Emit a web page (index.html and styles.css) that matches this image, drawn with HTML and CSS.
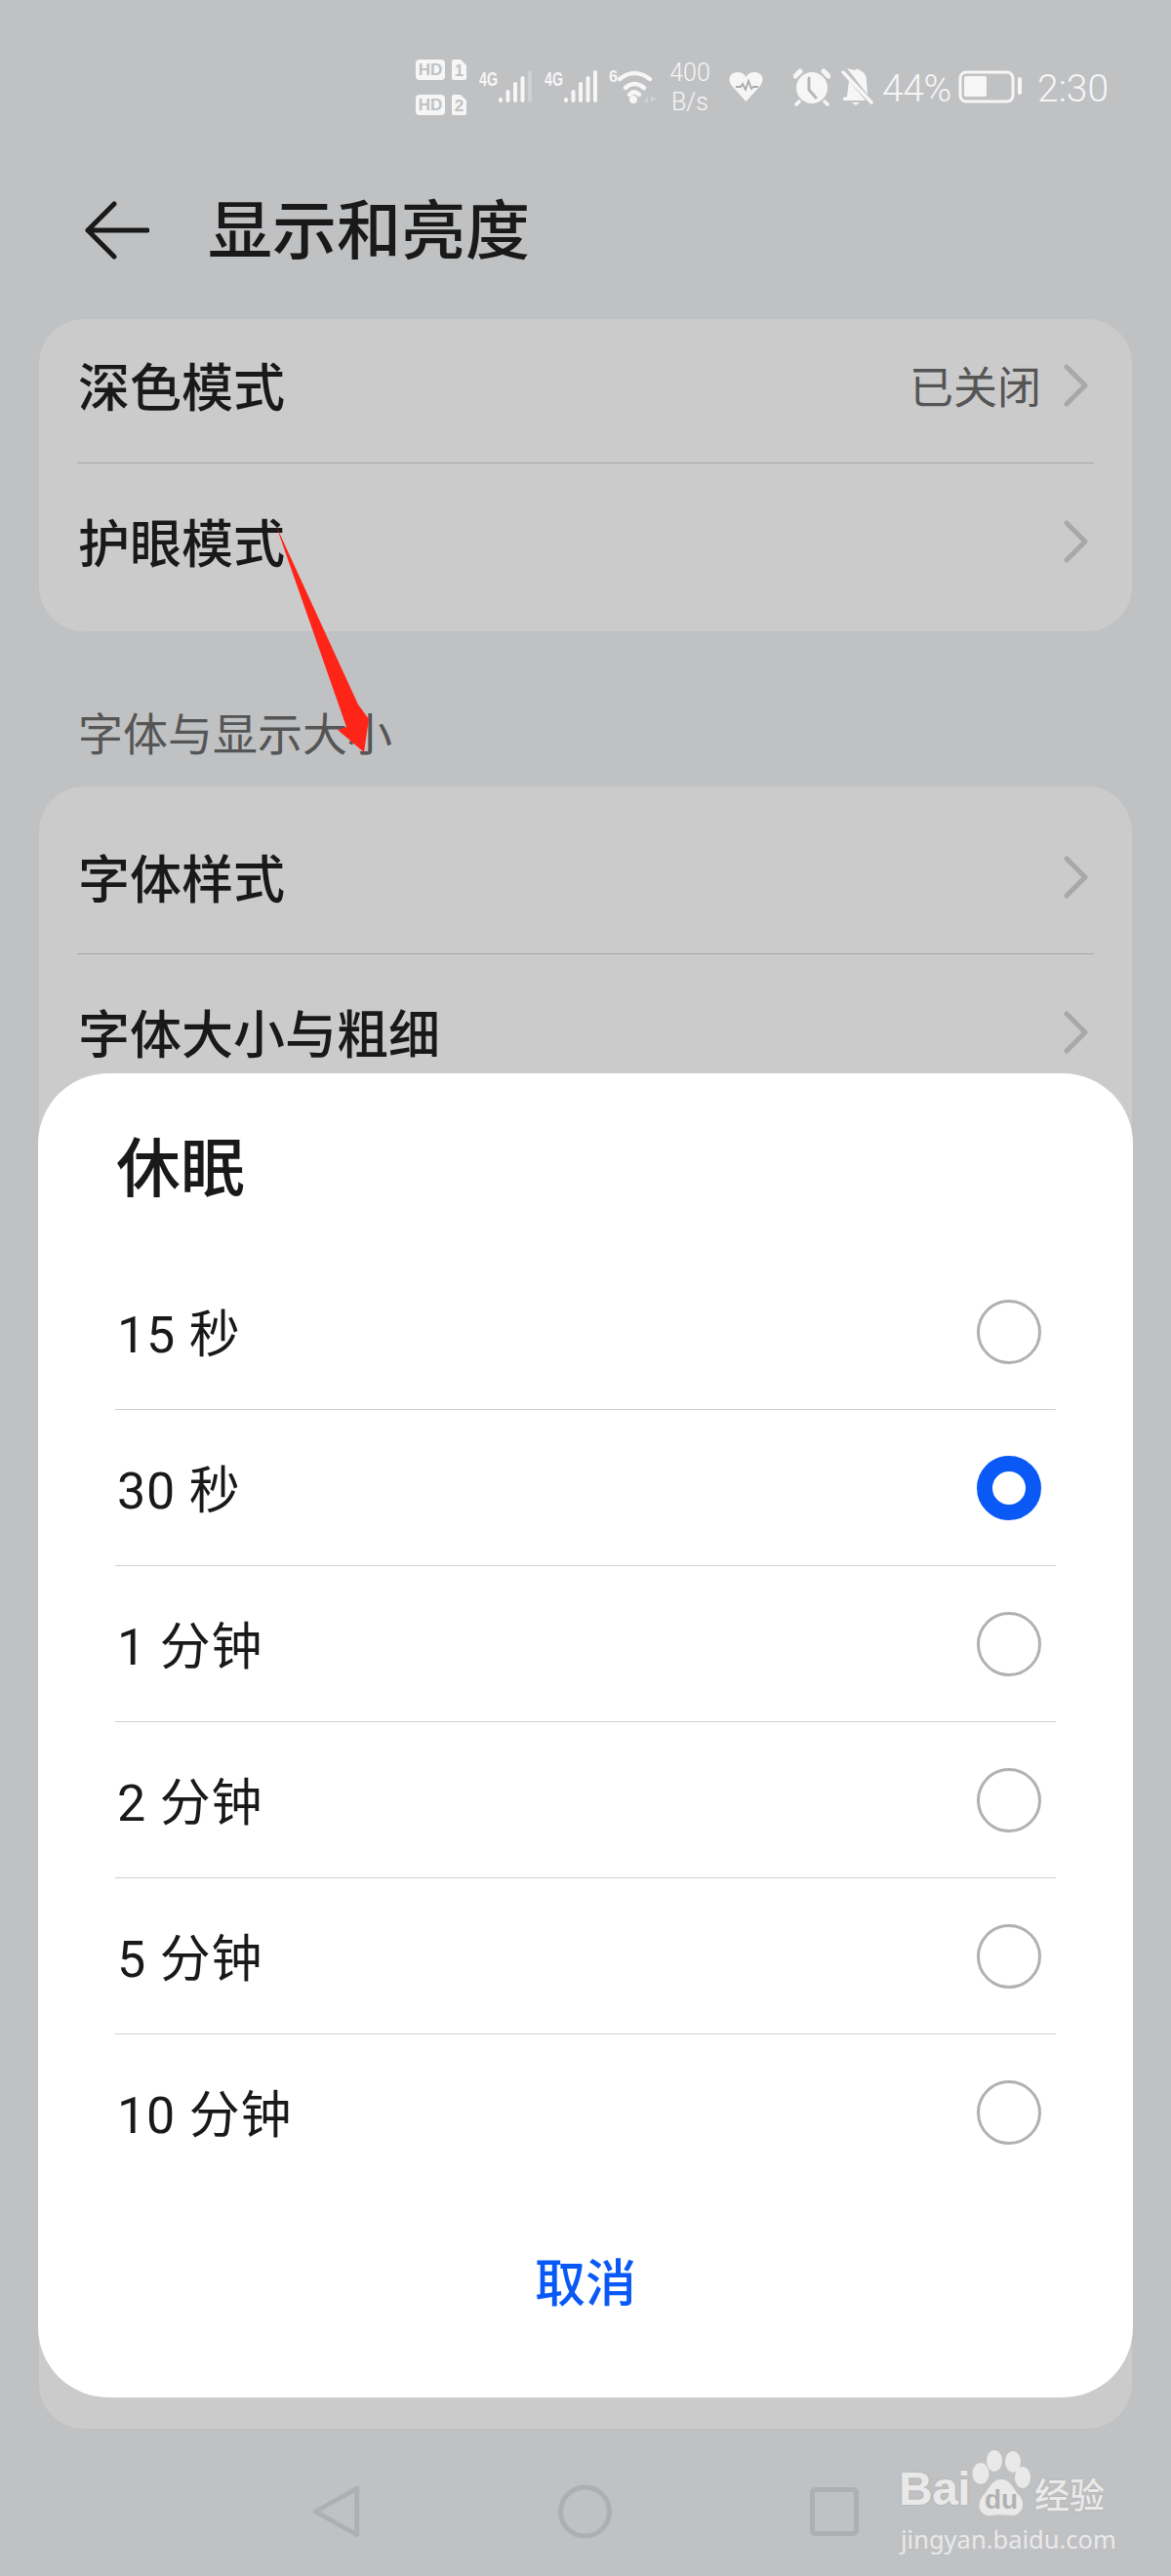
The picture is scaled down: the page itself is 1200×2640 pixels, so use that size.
FILE: index.html
```html
<!DOCTYPE html>
<html lang="zh-CN">
<head>
<meta charset="utf-8">
<title>显示和亮度</title>
<link rel="stylesheet" href="styles.css">
</head>
<body>
<div class="screen">
  <div class="status">
    <svg class="ic sim" viewBox="426 60 52 60">
      <rect x="426" y="61" width="30" height="21" rx="4" class="fill"/><text x="441" y="77" class="hd">HD</text>
      <path d="M465 61h7l6 6v13a2 2 0 0 1-2 2h-11a2 2 0 0 1-2-2v-17a2 2 0 0 1 2-2z" class="fill"/><text x="470.500" y="78" class="hd">1</text>
      <rect x="426" y="97" width="30" height="21" rx="4" class="fill"/><text x="441" y="113" class="hd">HD</text>
      <path d="M465 97h7l6 6v13a2 2 0 0 1-2 2h-11a2 2 0 0 1-2-2v-17a2 2 0 0 1 2-2z" class="fill"/><text x="470.500" y="114" class="hd">2</text>
    </svg>
    <svg class="ic signal" viewBox="491 60 54 60">
      <text x="491" y="87.500" class="lte" textLength="19" lengthAdjust="spacingAndGlyphs">4G</text>
      <rect x="511" y="100" width="4" height="5" rx="2" class="fill"/>
      <rect x="518.500" y="92" width="4" height="13" rx="2" class="fill"/>
      <rect x="526" y="84" width="4" height="21" rx="2" class="fill"/>
      <rect x="533.500" y="78" width="4" height="27" rx="2" class="fill"/>
      <rect x="541" y="72" width="4" height="33" rx="2" class="dim"/>
    </svg>
    <svg class="ic signal" viewBox="558 60 54 60">
      <text x="558" y="87.500" class="lte" textLength="19" lengthAdjust="spacingAndGlyphs">4G</text>
      <rect x="578" y="100" width="4" height="5" rx="2" class="fill"/>
      <rect x="585.500" y="92" width="4" height="13" rx="2" class="fill"/>
      <rect x="593" y="84" width="4" height="21" rx="2" class="fill"/>
      <rect x="600.500" y="78" width="4" height="27" rx="2" class="fill"/>
      <rect x="608" y="72" width="4" height="33" rx="2" class="fill"/>
    </svg>
    <svg class="ic wifi" viewBox="624 60 48 60">
      <text x="624" y="84" class="six" textLength="9" lengthAdjust="spacingAndGlyphs">6</text>
      <path d="M635 81Q650 69 666 81M641 90Q650 82 660 90M645 97Q650 92 655 97" class="wave"/>
      <circle cx="649" cy="102" r="4" class="fill"/>
      <path d="M660 105l4-7v7zM667 98l5 3.500-5 3.500z" class="dim"/>
    </svg>
    <div class="speed"><span>400</span><span>B/s</span></div>
    <svg class="ic heart" viewBox="747 60 35 60">
      <path d="M764.500 104L750 88C744 79 750 74 756 74C760 74 763 76 764.500 79C766 76 769 74 773 74C779 74 785 79 779 88Z" class="fill"/>
      <path d="M754 89h5l2-3 3 6 3-9 3 8 2-2h5" class="pulse"/>
    </svg>
    <svg class="ic alarm" viewBox="813 60 38 60">
      <circle cx="832" cy="90" r="16" class="fill"/>
      <path d="M815 78l5-5 M849 78l-5-5" class="ear"/>
      <path d="M819 104l-3 3M845 104l3 3" class="foot"/>
      <path d="M829 80v12l7 8" class="hands"/>
    </svg>
    <svg class="ic bell" viewBox="862 60 33 60">
      <path d="M876 72a3 3 0 0 1 5 0c5 2 7 6 7 11l1 14-21-27zM870 83l17 20h-23v-3l4-1z" class="fill"/>
      <path d="M873 105h8l-4 3z" class="fill"/>
      <path d="M864 74l29 31" class="slash"/>
    </svg>
    <span class="pct">44%</span>
    <svg class="ic battery" viewBox="982 60 65 60">
      <rect x="984" y="74" width="54" height="30" rx="6" class="batbox"/>
      <rect x="988" y="78" width="23" height="21" rx="2" class="fill"/>
      <rect x="1043" y="79" width="4" height="18" rx="2" class="fill"/>
    </svg>
    <span class="time">2:30</span>
  </div>

  <header class="head">
    <svg class="back" viewBox="0 0 66 60"><path d="M64 30H3M30 3L3 30l27 27"/></svg>
    <h1 class="title">显示和亮度</h1>
  </header>

  <section class="card">
    <div class="row row-a line"><span class="name">深色模式</span><span class="value">已关闭</span><svg class="chev" viewBox="0 0 25 44"><path d="M3 3l19 19L3 41"/></svg></div>
    <div class="row row-b"><span class="name">护眼模式</span><svg class="chev" viewBox="0 0 25 44"><path d="M3 3l19 19L3 41"/></svg></div>
  </section>

  <div class="section">字体与显示大小</div>

  <section class="card card-long">
    <div class="row row-c line"><span class="name">字体样式</span><svg class="chev" viewBox="0 0 25 44"><path d="M3 3l19 19L3 41"/></svg></div>
    <div class="row row-b"><span class="name">字体大小与粗细</span><svg class="chev" viewBox="0 0 25 44"><path d="M3 3l19 19L3 41"/></svg></div>
  </section>

  <nav class="nav">
    <svg class="navic tri" viewBox="316 2544 56 62"><path d="M366.500 2550.500V2599.500L322.500 2575Z"/></svg>
    <svg class="navic cir" viewBox="570 2546 60 58"><circle cx="599.500" cy="2575" r="25"/></svg>
    <svg class="navic squ" viewBox="828 2546 54 58"><rect x="832.500" y="2552.500" width="45" height="45" rx="3"/></svg>
  </nav>

  <svg class="arrow" viewBox="0 0 110 240"><path d="M3 3L87 186L98 201L93 235L66 212L75 209Z"/></svg>

  <div class="dialog">
    <h2 class="dtitle">休眠</h2>
    <ul class="opts">
      <li class="opt"><span>15 秒</span><i class="radio"></i></li>
      <li class="opt"><span>30 秒</span><i class="radio on"></i></li>
      <li class="opt"><span>1 分钟</span><i class="radio"></i></li>
      <li class="opt"><span>2 分钟</span><i class="radio"></i></li>
      <li class="opt"><span>5 分钟</span><i class="radio"></i></li>
      <li class="opt"><span>10 分钟</span><i class="radio"></i></li>
    </ul>
    <div class="cancel">取消</div>
  </div>

  <div class="mark">
    <div class="mark-top">
      <span class="bai">Bai</span>
      <svg class="paw" viewBox="0 0 64 70">
        <ellipse cx="11" cy="24" rx="8.500" ry="11" class="wm"/>
        <ellipse cx="25" cy="11" rx="8" ry="11" class="wm"/>
        <ellipse cx="44" cy="12" rx="8" ry="11" class="wm"/>
        <ellipse cx="54" cy="28" rx="8" ry="11" class="wm"/>
        <path d="M32 30C42 30 44 40 51 47C58 56 52 68 42 67C36 66 28 66 22 67C10 68 6 56 13 47C20 40 22 30 32 30Z" class="wm"/>
        <text x="32" y="60" class="du">du</text>
      </svg>
      <span class="jy">经验</span>
    </div>
    <div class="mark-url">jingyan.baidu.com</div>
  </div>
</div>
</body>
</html>
```

FILE: styles.css
```css
* { box-sizing: border-box; margin: 0; padding: 0; }
html, body { width: 1200px; height: 2640px; overflow: hidden; }
body { background: #c0c1c3; font-family: Roboto, "Noto Sans CJK SC", sans-serif; color: #191919; }
.screen { position: relative; width: 1200px; height: 2640px; display: flex; flex-direction: column; }

.status { height: 130px; padding: 60px 0 0 426px; display: flex; align-items: flex-start; color: #f6f6f6; }
.ic { height: 60px; flex: none; display: block; }
.sim { width: 52px; }
.signal { width: 54px; margin-left: 13px; }
.wifi { width: 48px; margin-left: 12px; }
.heart { width: 35px; margin-left: 20px; }
.alarm { width: 38px; margin-left: 31px; }
.bell { width: 33px; margin-left: 11px; }
.battery { width: 65px; margin-left: 9px; }
.fill { fill: #f6f6f6; }
.dim { fill: #d0d1d2; }
.hd { font: 700 17px "Liberation Sans", sans-serif; fill: #c0c1c3; text-anchor: middle; }
.lte { font: 700 20px "Liberation Sans", sans-serif; fill: #f6f6f6; }
.six { font: 700 16px "Liberation Sans", sans-serif; fill: #f6f6f6; }
.wave { fill: none; stroke: #f6f6f6; stroke-width: 4.5; stroke-linecap: round; }
.pulse { fill: none; stroke: #a9aaac; stroke-width: 1.8; }
.ear { fill: none; stroke: #f6f6f6; stroke-width: 5; stroke-linecap: round; }
.foot { fill: none; stroke: #f6f6f6; stroke-width: 3.5; stroke-linecap: round; }
.hands { fill: none; stroke: #b4b5b7; stroke-width: 3; stroke-linecap: round; stroke-linejoin: round; }
.slash { fill: none; stroke: #f6f6f6; stroke-width: 3.500; stroke-linecap: round; }
.batbox { fill: none; stroke: #f6f6f6; stroke-width: 3; }
.speed { width: 40px; margin-left: 15px; display: flex; flex-direction: column; align-items: center; gap: 6px; padding-top: 3px; font-size: 25px; line-height: 24px; font-weight: 300; flex: none; white-space: nowrap; }
.pct, .time { font-size: 39px; line-height: 38px; font-weight: 300; padding-top: 12px; flex: none; white-space: nowrap; }
.pct { margin-left: 9px; width: 69px; letter-spacing: -.4px; }
.time { margin-left: 16px; letter-spacing: 0; }

.head { height: 197px; padding: 15px 0 0 87px; display: flex; align-items: center; }
.back { width: 66px; height: 60px; flex: none; }
.back path { fill: none; stroke: #191919; stroke-width: 5; stroke-linecap: round; stroke-linejoin: round; }
.title { margin: 4px 0 0 60px; font-size: 66px; line-height: 80px; font-weight: 500; }

.card { margin: 0 40px; height: 320px; background: #cbcbcb; border-radius: 46px; padding: 0 39px; flex: none; }
.card-long { height: 1683px; }
.row { display: flex; align-items: center; padding: 0 6px 0 1px; }
.row-a { height: 148px; padding-bottom: 3px; }
.row-b { height: 172px; padding-bottom: 4px; }
.row-c { height: 172px; padding-top: 23px; }
.line { border-bottom: 1px solid #a7a7a7; }
.name { font-size: 53px; line-height: 70px; font-weight: 500; flex: 1; white-space: nowrap; }
.value { font-size: 45px; line-height: 60px; color: #555; margin-right: 23px; }
.chev { width: 25px; height: 44px; flex: none; margin-bottom: 9px; }
.chev path { fill: none; stroke: #a8a8a8; stroke-width: 5; stroke-linecap: round; stroke-linejoin: round; }
.section { height: 159px; padding: 51px 0 0 80px; font-size: 46px; line-height: 110px; color: #555; flex: none; }

.nav { height: 151px; flex: none; position: relative; padding-top: 55px; display: flex; }
.navic { height: 60px; flex: none; }
.navic path, .navic circle, .navic rect { fill: none; stroke: #aeafb0; stroke-width: 5; stroke-linejoin: round; }
.tri { width: 56px; margin-left: 316px; }
.cir { width: 60px; margin-left: 198px; }
.squ { width: 54px; margin-left: 198px; }

.arrow { position: absolute; left: 280px; top: 536px; width: 110px; height: 240px; }
.arrow path { fill: #ff2418; }

.dialog { position: absolute; left: 39px; top: 1100px; width: 1122px; height: 1357px; background: #fff; border-radius: 72px; display: flex; flex-direction: column; }
.dtitle { height: 185px; padding: 59px 0 0 80px; font-size: 66px; line-height: 80px; font-weight: 500; }
.opts { list-style: none; margin: 0 79px; }
.opt { height: 160px; display: flex; align-items: center; justify-content: space-between; border-bottom: 1px solid #cfcfcf; padding-right: 15px; font-size: 52px; line-height: 70px; padding-left: 2px; letter-spacing: .8px; }
.opt span { padding-top: 8px; }
.opt:last-child { border-bottom: 0; }
.radio { width: 66px; height: 66px; border-radius: 50%; border: 3.5px solid #b1b1b1; display: block; flex: none; }
.radio.on { border: 16.5px solid #0a59f7; }
.cancel { text-align: center; font-size: 52px; line-height: 70px; font-weight: 500; color: #0a59f7; margin-top: 62px; }

.mark { position: absolute; left: 921px; top: 2511px; width: 220px; color: #e9e9e9; }
.mark-top { display: flex; align-items: flex-end; height: 70px; }
.bai { font: 700 48px/48px "Liberation Sans", sans-serif; width: 73px; flex: none; padding-bottom: 6px; letter-spacing: -.5px; text-shadow: 0 0 2px #a5a6a8; }
.paw { width: 64px; height: 70px; flex: none; }
.wm { fill: #e9e9e9; }
.du { font: 700 28px "Liberation Sans", sans-serif; fill: #b0b1b3; text-anchor: middle; }
.jy { font-size: 36px; line-height: 44px; font-weight: 500; flex: none; margin-left: 2px; text-shadow: 0 0 2px #a5a6a8; white-space: nowrap; }
.mark-url { font: 400 25.500px/36px "Noto Sans", sans-serif; margin: 3px 0 0 2px; white-space: nowrap; }
```
